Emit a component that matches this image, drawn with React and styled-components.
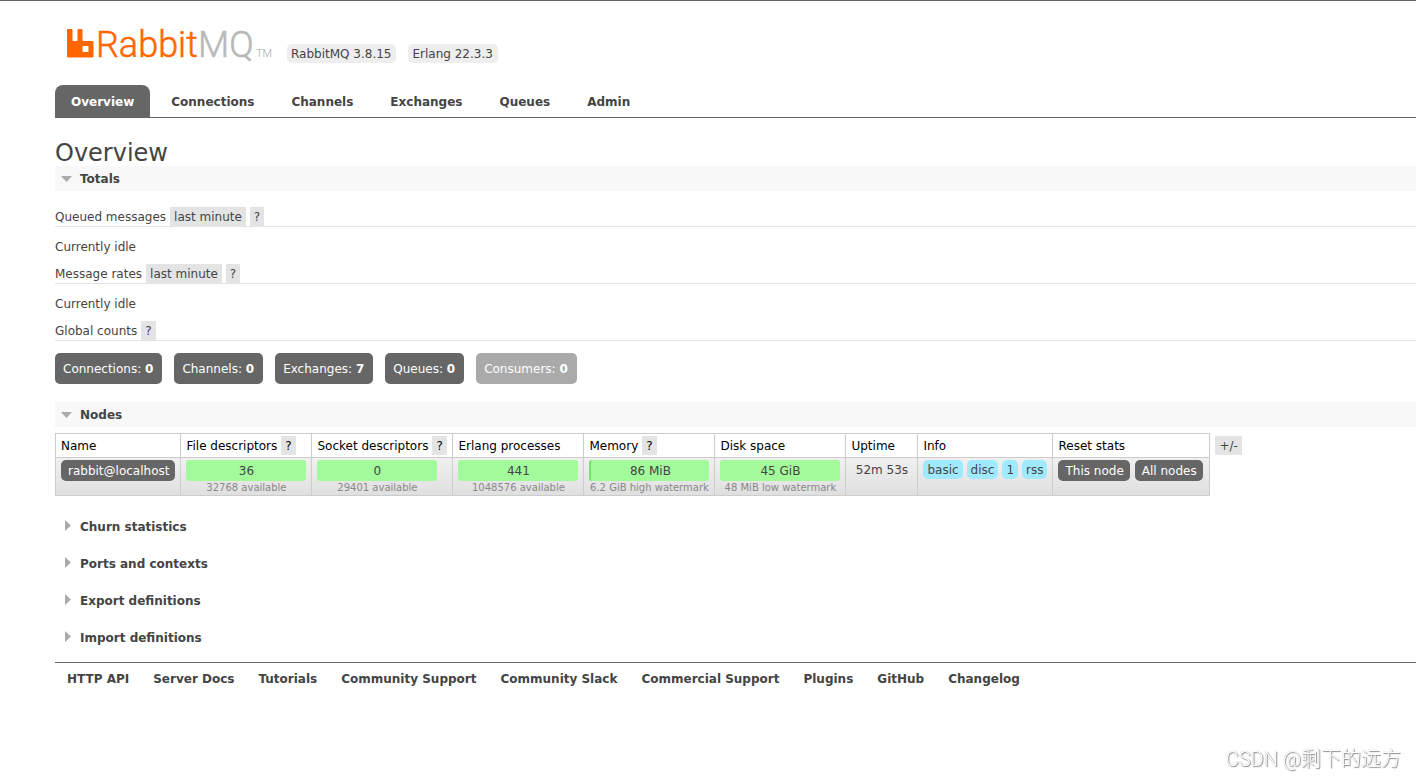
import React, { useState } from 'react'
import styled, { createGlobalStyle, css } from 'styled-components'

const GlobalStyle = createGlobalStyle`
    * {
        box-sizing: border-box;
    }

    body {
        margin: 0;
        background: #fff;
        color: #444;
        font: 12px/16px Verdana, "DejaVu Sans", sans-serif;
    }

    a {
        color: inherit;
        text-decoration: none;
    }

    button {
        font: inherit;
        color: inherit;
        border: 0;
        cursor: pointer;
    }
`

const PageStyled = styled.div`
    padding-left: 55px;
    border-top: 1px solid #666;
`

const HeaderStyled = styled.header`
    display: flex;
    align-items: flex-end;
    gap: 12px;
    padding: 16px 0 22px 12px;
`

const LogoStyled = styled.a`
    display: flex;
    margin-right: 3px;

    svg {
        overflow: visible;
    }
`

const VersionStyled = styled.span`
    padding: 2px 5px 1px 4px;
    border-radius: 5px;
    background: #eee;
    white-space: nowrap;
`

const TabsStyled = styled.nav`
    display: flex;
    gap: 5px;
    border-bottom: 1px solid #666;
`

const TabStyled = styled.a`
    padding: 9px 16px 7px;
    border-radius: 8px 8px 0 0;
    font-weight: bold;

    ${props => props.$active && css`
        background: #666;
        color: #fff;
    `}
`

const TitleStyled = styled.h1`
    margin: 22px 0 0;
    font-size: 24px;
    font-weight: normal;
    line-height: 26px;
`

const SectionStyled = styled.section`
    margin-bottom: ${props => props.$open ? '18px' : '12px'};
`

const SectionHeadingStyled = styled.h2`
    margin: 0;
    font-size: 12px;
    background: ${props => props.$open ? '#f8f8f8' : 'none'};
`

const SectionToggleStyled = styled.button`
    display: flex;
    width: 100%;
    padding: 5px 5px 4px;
    background: none;
    text-align: left;
`

const ArrowStyled = styled.svg`
    width: 14px;
    height: 14px;
    margin-right: 6px;
    fill: #aaa;
`

const SubHeadingStyled = styled.h3`
    display: flex;
    gap: 4px;
    height: 20px;
    margin: ${props => props.$first ? '16px' : '9px'} 0 12px;
    border-bottom: 1px solid #e4e4e4;
    font-size: 12px;
    font-weight: normal;
    line-height: 20px;
`

const PopupButtonStyled = styled.button`
    padding: 2px 4px 1px;
    background: #e4e4e4;
    line-height: 16px;
`

const IdleStyled = styled.p`
    margin: 0;
`

const CountsStyled = styled.div`
    display: flex;
    gap: 12px;
`

const CountStyled = styled.a`
    padding: 8px 9px 7px 8px;
    border-radius: 5px;
    background: ${props => props.$disabled ? '#aaa' : '#666'};
    color: #fff;
`

const NodesStyled = styled.div`
    display: flex;
    align-items: flex-start;
    gap: 5px;
    margin-top: 6px;

    > button {
        margin-top: 3px;
    }
`

const TableStyled = styled.table`
    border-collapse: collapse;
    white-space: nowrap;

    th, td {
        border: 1px solid #ccc;
        text-align: left;
    }

    th {
        padding: 2px 5px;
        color: #000;
        font-weight: normal;
        vertical-align: baseline;
    }

    th button {
        margin-left: 4px;
    }

    td {
        padding: 2px 5px 0;
        vertical-align: top;
    }

    tbody tr {
        background: linear-gradient(#f0f0f0, #dfdfdf);
    }
`

const HeadCellStyled = styled.th`
    min-width: ${props => props.$width}px;
`

const NodeButtonStyled = styled.button`
    display: inline-block;
    margin-right: ${props => props.$spaced ? '5px' : '0'};
    padding: 3px 6px 2px 7px;
    border-radius: 5px;
    background: #666;
    color: #fff;
    vertical-align: top;
`

const BarStyled = styled.div`
    width: 120px;
    padding: 3px 0 2px;
    border-left: ${props => props.$used ? '2px solid #79e070' : '0'};
    border-radius: 3px;
    background: #a2fa9b;
    text-align: center;
`

const LimitStyled = styled.div`
    width: 120px;
    color: #888;
    font-size: 10px;
    line-height: 14px;
    text-align: center;
`

const UptimeStyled = styled.div`
    padding: 2px 4px;
    text-align: center;
`

const InfoStyled = styled.div`
    display: flex;
    gap: 4px;
`

const TagStyled = styled.abbr`
    padding: 2px 4px 1px;
    border-radius: 5px;
    background: #a0eaff;
`

const FooterStyled = styled.footer`
    display: flex;
    flex-wrap: wrap;
    gap: 24px;
    padding: 8px 12px;
    border-top: 1px solid #666;
    font-weight: bold;
`

const WatermarkStyled = styled.div`
    position: fixed;
    right: 15px;
    bottom: 3px;
    color: #fff;
    font: 300 20px/32px Roboto, "Noto Sans CJK SC", sans-serif;
    text-shadow: 1px 1px 1px #888, 0 0 1px #aaa;
`

const tabs = ['Overview', 'Connections', 'Channels', 'Exchanges', 'Queues', 'Admin']

const counts = [
    { label: 'Connections', value: 0 },
    { label: 'Channels', value: 0 },
    { label: 'Exchanges', value: 7 },
    { label: 'Queues', value: 0 },
    { label: 'Consumers', value: 0, disabled: true },
]

const columns = [
    { title: 'Name', width: 125 },
    { title: 'File descriptors', width: 131, help: true },
    { title: 'Socket descriptors', width: 141, help: true },
    { title: 'Erlang processes', width: 131 },
    { title: 'Memory', width: 131, help: true },
    { title: 'Disk space', width: 131 },
    { title: 'Uptime', width: 72 },
    { title: 'Info', width: 135 },
    { title: 'Reset stats', width: 157 },
]

const resources = [
    { value: '36', limit: '32768 available' },
    { value: '0', limit: '29401 available' },
    { value: '441', limit: '1048576 available' },
    { value: '86 MiB', limit: '6.2 GiB high watermark', used: true },
    { value: '45 GiB', limit: '48 MiB low watermark' },
]

const footerLinks = [
    'HTTP API', 'Server Docs', 'Tutorials', 'Community Support', 'Community Slack',
    'Commercial Support', 'Plugins', 'GitHub', 'Changelog',
]

function Logo(){
    return(
        <LogoStyled href='#/'>
            <svg width='205' height='46' viewBox='0 0 205 46' role='img' aria-label='RabbitMQ'>
                <path
                    fill='#f60'
                    fillRule='evenodd'
                    d='M1 12h3.500q1 0 1 1v10q0 1 1 1h3q1 0 1-1V13q0-1 1-1h3q1 0 1 1v10q0 1 1 1h9q1 0 1 1v14.500q0 1-1 1H1q-1 0-1-1V13q0-1 1-1zM16.500 29q-1 0-1 1v4q0 1 1 1h4q1 0 1-1v-4q0-1-1-1z'
                />
                <g fontFamily='Roboto, sans-serif' fontWeight='300'>
                    <text x='29' y='40' fontSize='36' fill='#f60' stroke='#f60' strokeWidth='0.5'>Rabbit</text>
                    <text x='131' y='40' fontSize='36' fill='#b8b8b8' stroke='#b8b8b8' strokeWidth='0.5'>MQ</text>
                    <text x='189' y='40' fontSize='11' fill='#a8a8a8'>TM</text>
                </g>
            </svg>
        </LogoStyled>
    )
}

function Help(){
    return <PopupButtonStyled type='button' aria-label='Help'>?</PopupButtonStyled>
}

function Section({ title, defaultOpen = false, children }){
    const [open, setOpen] = useState(defaultOpen)

    return(
        <SectionStyled $open={open}>
            <SectionHeadingStyled $open={open}>
                <SectionToggleStyled type='button' aria-expanded={open} onClick={() => setOpen(!open)}>
                    <ArrowStyled viewBox='0 0 14 14' aria-hidden='true'>
                        <path d={open ? 'M1 5h11l-5.500 6z' : 'M5 1l6 5.500-6 5.500z'} />
                    </ArrowStyled>
                    {title}
                </SectionToggleStyled>
            </SectionHeadingStyled>
            {open && children}
        </SectionStyled>
    )
}

function NodesTable(){
    return(
        <NodesStyled>
            <TableStyled>
                <thead>
                    <tr>
                        {
                            columns.map(col => <HeadCellStyled key={col.title} $width={col.width}>
                                {col.title}{col.help && <Help />}
                            </HeadCellStyled>)
                        }
                    </tr>
                </thead>
                <tbody>
                    <tr>
                        <td><NodeButtonStyled as='a' href='#/nodes'>rabbit@localhost</NodeButtonStyled></td>
                        {
                            resources.map(res => <td key={res.limit}>
                                <BarStyled $used={res.used}>{res.value}</BarStyled>
                                <LimitStyled>{res.limit}</LimitStyled>
                            </td>)
                        }
                        <td><UptimeStyled>52m 53s</UptimeStyled></td>
                        <td>
                            <InfoStyled>
                                {['basic', 'disc', '1', 'rss'].map(tag => <TagStyled key={tag}>{tag}</TagStyled>)}
                            </InfoStyled>
                        </td>
                        <td>
                            <NodeButtonStyled type='button' $spaced>This node</NodeButtonStyled>
                            <NodeButtonStyled type='button'>All nodes</NodeButtonStyled>
                        </td>
                    </tr>
                </tbody>
            </TableStyled>
            <PopupButtonStyled type='button'>+/-</PopupButtonStyled>
        </NodesStyled>
    )
}

export default function App(){
    return(
        <PageStyled>
            <GlobalStyle />
            <HeaderStyled>
                <Logo />
                <VersionStyled>RabbitMQ 3.8.15</VersionStyled>
                <VersionStyled>Erlang 22.3.3</VersionStyled>
            </HeaderStyled>
            <TabsStyled>
                {tabs.map(tab => <TabStyled key={tab} href={`#/${tab.toLowerCase()}`} $active={tab === 'Overview'}>{tab}</TabStyled>)}
            </TabsStyled>
            <main>
                <TitleStyled>Overview</TitleStyled>
                <Section title='Totals' defaultOpen>
                    <SubHeadingStyled $first>
                        Queued messages <PopupButtonStyled type='button'>last minute</PopupButtonStyled> <Help />
                    </SubHeadingStyled>
                    <IdleStyled>Currently idle</IdleStyled>
                    <SubHeadingStyled>
                        Message rates <PopupButtonStyled type='button'>last minute</PopupButtonStyled> <Help />
                    </SubHeadingStyled>
                    <IdleStyled>Currently idle</IdleStyled>
                    <SubHeadingStyled>Global counts <Help /></SubHeadingStyled>
                    <CountsStyled>
                        {
                            counts.map(item => <CountStyled key={item.label} href={`#/${item.label.toLowerCase()}`} $disabled={item.disabled}>
                                {item.label}: <strong>{item.value}</strong>
                            </CountStyled>)
                        }
                    </CountsStyled>
                </Section>
                <Section title='Nodes' defaultOpen>
                    <NodesTable />
                </Section>
                <Section title='Churn statistics' />
                <Section title='Ports and contexts' />
                <Section title='Export definitions' />
                <Section title='Import definitions' />
            </main>
            <FooterStyled>
                {footerLinks.map(link => <a key={link} href='#/'>{link}</a>)}
            </FooterStyled>
            <WatermarkStyled>CSDN @剩下的远方</WatermarkStyled>
        </PageStyled>
    )
}
